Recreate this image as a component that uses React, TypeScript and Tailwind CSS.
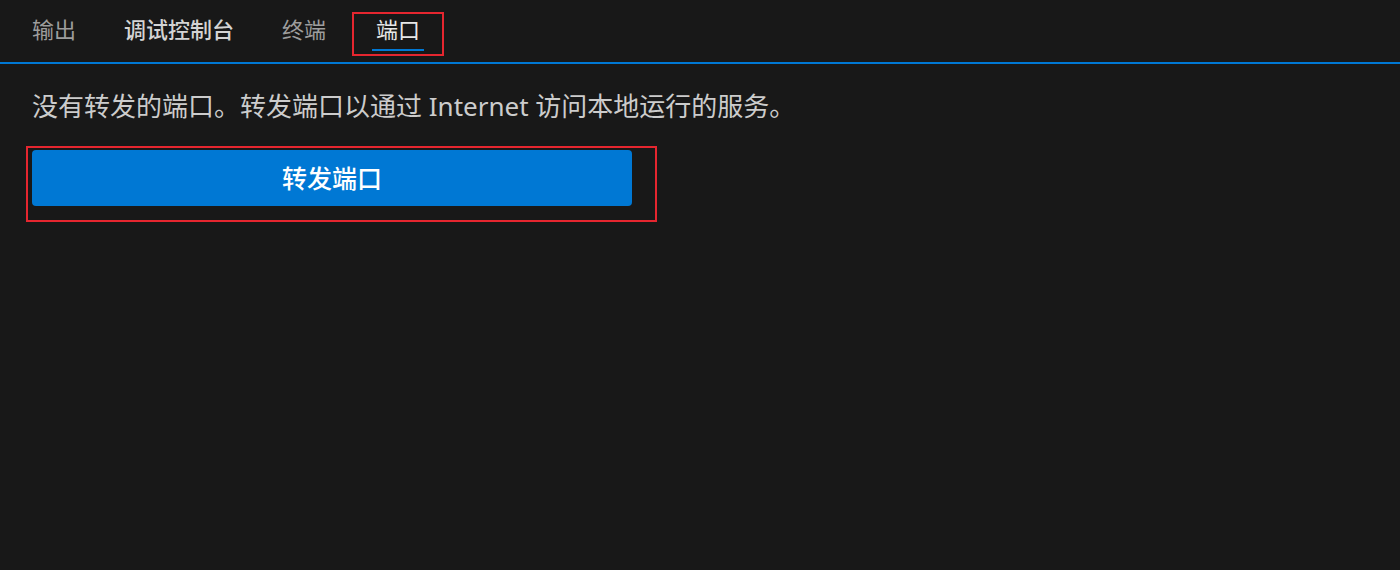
const tabs = [
  { label: "输出", color: "text-[#9d9d9d]", active: false, marked: false },
  { label: "调试控制台", color: "text-[#d4d4d4] font-medium", active: false, marked: false },
  { label: "终端", color: "text-[#9d9d9d]", active: false, marked: false },
  { label: "端口", color: "text-[#e7e7e7]", active: true, marked: true },
];

function PanelTabs() {
  return (
    <div className="flex h-[64px] pl-2 border-b-2 border-[#0078d4]">
      {tabs.map((t) => (
        <div
          key={t.label}
          className={
            "mt-3 h-[44px] border-2 px-[18px] flex flex-col items-center " +
            (t.marked ? "ml-[2px] border-[#e5262f]" : "border-transparent")
          }
        >
          <span className={"px-1 text-[22px] leading-[30px] " + t.color}>{t.label}</span>
          <span
            className={
              "mt-[5px] h-[2px] w-full " + (t.active ? "bg-[#0078d4]" : "bg-transparent")
            }
          />
        </div>
      ))}
    </div>
  );
}

export default function App() {
  return (
    <div
      className="w-full h-[570px] bg-[#181818] overflow-hidden"
      style={{ fontFamily: '"Noto Sans", "Noto Sans CJK SC", sans-serif' }}
    >
      <PanelTabs />
      <p className="mt-[24px] px-8 text-[26px] leading-[36px] text-[#cccccc]">
        没有转发的端口。转发端口以通过 Internet 访问本地运行的服务。
      </p>
      <div className="mt-[22px] ml-[26px] w-[631px] h-[76px] border-2 border-[#e5262f] pl-1 pt-[2px]">
        <button className="w-[600px] h-[56px] rounded-[4px] bg-[#0078d4] text-white text-[25px] font-medium leading-[56px]">
          转发端口
        </button>
      </div>
    </div>
  );
}
